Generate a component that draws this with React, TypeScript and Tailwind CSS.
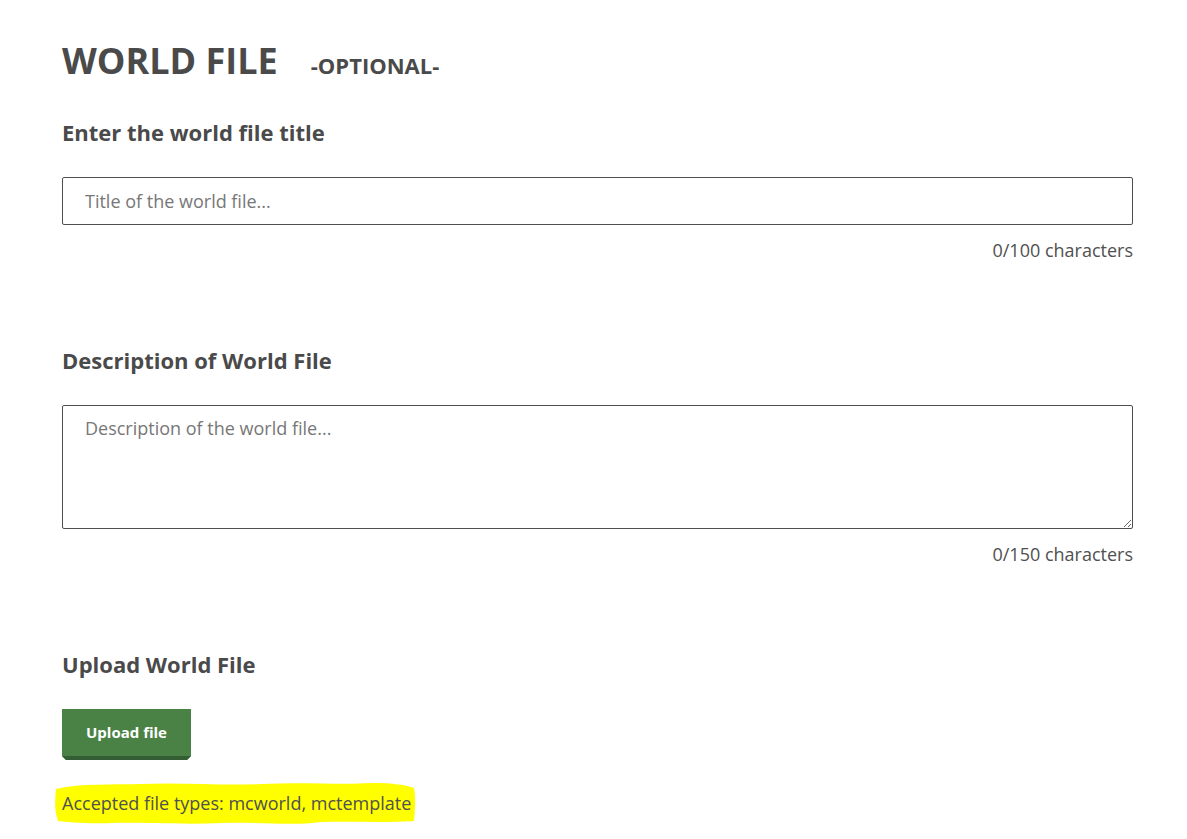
import React from "react";

export default function App() {
  return (
    <div className="min-h-[839px] w-[1187px] bg-white text-[#4a4a4a]" style={{ fontFamily: '"Open Sans", "Noto Sans", sans-serif' }}>
      <div className="pl-[62px] pr-[54px] pt-[36px]">
        <div className="flex items-baseline">
          <h1 className="text-[36px] leading-[50px] font-bold">WORLD FILE</h1>
          <span className="ml-[33px] text-[22px] font-bold">-OPTIONAL-</span>
        </div>

        <h2 className="mt-[32px] text-[22px] leading-[28px] font-bold">Enter the world file title</h2>
        <input
          className="mt-[31px] block h-[48px] w-full rounded-[2px] border border-[#4f4f4f] px-[22px] text-[18px] text-[#4a4a4a] placeholder:text-[#777] outline-none"
          placeholder="Title of the world file..."
        />
        <div className="mt-[12px] text-right text-[18px] leading-[26px] text-[#505050]">0/100 characters</div>

        <h2 className="mt-[83px] text-[22px] leading-[28px] font-bold">Description of World File</h2>
        <textarea
          className="mt-[31px] block h-[124px] w-full rounded-[2px] border border-[#4f4f4f] px-[22px] py-[9px] text-[18px] text-[#4a4a4a] placeholder:text-[#777] outline-none"
          placeholder="Description of the world file..."
        />
        <div className="mt-[12px] text-right text-[18px] leading-[26px] text-[#505050]">0/150 characters</div>

        <h2 className="mt-[83px] text-[22px] leading-[28px] font-bold">Upload World File</h2>
        <button
          className="mt-[31px] block h-[51px] w-[129px] bg-[#4a8246] pb-[4px] text-[15px] font-bold text-white shadow-[inset_0_-4px_0_#335d33]"
          style={{ clipPath: "polygon(0 0,100% 0,100% calc(100% - 4px),calc(100% - 4px) 100%,4px 100%,0 calc(100% - 4px))" }}
        >
          Upload file
        </button>
        <div className="relative mt-[25px] inline-block">
          <svg className="absolute left-[-10px] top-[-5px]" width="366" height="46" viewBox="0 0 366 46">
            <path
              d="M4 9 C30 3 60 5 90 4 C130 2 170 6 210 4 C250 2 290 5 320 3 C340 3 355 5 362 8 C364 18 363 30 362 41 C330 43 300 41 270 42 C240 46 210 42 170 43 C130 45 90 42 60 43 C35 44 15 42 6 41 C2 30 3 19 4 9 Z"
              fill="#ffff00"
            />
          </svg>
          <span className="relative text-[18px] leading-[36px] text-[#505050]">Accepted file types: mcworld, mctemplate</span>
        </div>
      </div>
    </div>
  );
}
